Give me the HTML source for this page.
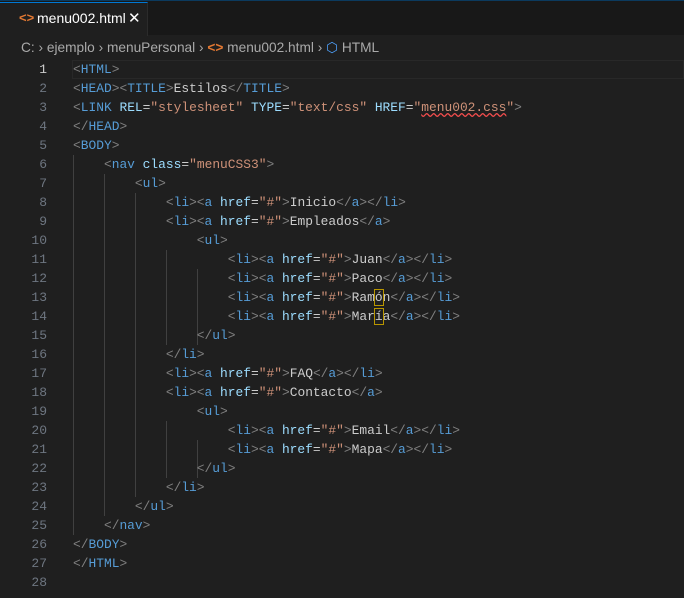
<!DOCTYPE html><html><head><style>
body{margin:0;width:684px;height:598px;background:#1f1f1f;overflow:hidden;font-family:"Liberation Sans",sans-serif;position:relative}
.tabs{position:absolute;top:0;left:0;width:684px;height:35px;background:#181818;border-top:1px solid #0b3a5e;box-sizing:border-box}
.tab{position:absolute;left:0;top:1px;width:148px;height:34px;background:#1f1f1f;border-right:1px solid #2b2b2b;border-top:1px solid #0078d4;box-sizing:border-box;color:#fff;font-size:14px}
.tab .i{position:absolute;left:19px;top:7px;color:#e37933;font-size:13px;font-weight:bold}
.tab .n{position:absolute;left:37px;top:7px}
.tab .x{position:absolute;left:128px;top:6px;font-size:15px}
.bc{position:absolute;top:40px;left:21px;font-size:13.7px;color:#a9a9a9;white-space:pre}
.code{position:absolute;top:60px;left:0;font-family:"Liberation Mono",monospace;font-size:12.9px;line-height:19px;color:#cccccc}
.l{height:19px;position:relative;white-space:pre}
.ln{position:absolute;left:0;width:47px;text-align:right;color:#6e7681;font-size:13px}
.ln.c{color:#cccccc}
.t{position:absolute;left:73px}
.b{color:#808080}.g{color:#569cd6}.a{color:#9cdcfe}.s{color:#ce9178}
.hl{position:absolute;left:72px;top:60px;width:612px;height:19px;border:1px solid #282828;box-sizing:border-box}
.ig{position:absolute;width:1px;background:#404040}
.u{text-decoration:underline wavy #f14c4c}
.bx{outline:1px solid #b89500}
</style></head><body>
<div class="tabs"><div class="tab"><span class="i">&lt;&gt;</span><span class="n">menu002.html</span><span class="x">✕</span></div></div>
<div class="bc">C: › ejemplo › menuPersonal › <span style="color:#e37933;font-weight:bold">&lt;&gt;</span> menu002.html › <span style="color:#4fa3ff">⬡</span> HTML</div>
<div class="hl"></div>
<div class="ig" style="left:73px;top:155px;height:380px"></div>
<div class="ig" style="left:104px;top:174px;height:342px"></div>
<div class="ig" style="left:135px;top:193px;height:304px"></div>
<div class="ig" style="left:166px;top:250px;height:95px"></div>
<div class="ig" style="left:166px;top:421px;height:57px"></div>
<div class="ig" style="left:197px;top:269px;height:76px"></div>
<div class="ig" style="left:197px;top:440px;height:38px"></div>
<div class="code">
<div class="l"><span class="ln c">1</span><span class="t"><span class="b">&lt;</span><span class="g">HTML</span><span class="b">&gt;</span></span></div>
<div class="l"><span class="ln">2</span><span class="t"><span class="b">&lt;</span><span class="g">HEAD</span><span class="b">&gt;&lt;</span><span class="g">TITLE</span><span class="b">&gt;</span>Estilos<span class="b">&lt;/</span><span class="g">TITLE</span><span class="b">&gt;</span></span></div>
<div class="l"><span class="ln">3</span><span class="t"><span class="b">&lt;</span><span class="g">LINK</span> <span class="a">REL</span>=<span class="s">"stylesheet"</span> <span class="a">TYPE</span>=<span class="s">"text/css"</span> <span class="a">HREF</span>=<span class="s">"<span class="u">menu002.css</span>"</span><span class="b">&gt;</span></span></div>
<div class="l"><span class="ln">4</span><span class="t"><span class="b">&lt;/</span><span class="g">HEAD</span><span class="b">&gt;</span></span></div>
<div class="l"><span class="ln">5</span><span class="t"><span class="b">&lt;</span><span class="g">BODY</span><span class="b">&gt;</span></span></div>
<div class="l"><span class="ln">6</span><span class="t">    <span class="b">&lt;</span><span class="g">nav</span> <span class="a">class</span>=<span class="s">"menuCSS3"</span><span class="b">&gt;</span></span></div>
<div class="l"><span class="ln">7</span><span class="t">        <span class="b">&lt;</span><span class="g">ul</span><span class="b">&gt;</span></span></div>
<div class="l"><span class="ln">8</span><span class="t">            <span class="b">&lt;</span><span class="g">li</span><span class="b">&gt;&lt;</span><span class="g">a</span> <span class="a">href</span>=<span class="s">"#"</span><span class="b">&gt;</span>Inicio<span class="b">&lt;/</span><span class="g">a</span><span class="b">&gt;&lt;/</span><span class="g">li</span><span class="b">&gt;</span></span></div>
<div class="l"><span class="ln">9</span><span class="t">            <span class="b">&lt;</span><span class="g">li</span><span class="b">&gt;&lt;</span><span class="g">a</span> <span class="a">href</span>=<span class="s">"#"</span><span class="b">&gt;</span>Empleados<span class="b">&lt;/</span><span class="g">a</span><span class="b">&gt;</span></span></div>
<div class="l"><span class="ln">10</span><span class="t">                <span class="b">&lt;</span><span class="g">ul</span><span class="b">&gt;</span></span></div>
<div class="l"><span class="ln">11</span><span class="t">                    <span class="b">&lt;</span><span class="g">li</span><span class="b">&gt;&lt;</span><span class="g">a</span> <span class="a">href</span>=<span class="s">"#"</span><span class="b">&gt;</span>Juan<span class="b">&lt;/</span><span class="g">a</span><span class="b">&gt;&lt;/</span><span class="g">li</span><span class="b">&gt;</span></span></div>
<div class="l"><span class="ln">12</span><span class="t">                    <span class="b">&lt;</span><span class="g">li</span><span class="b">&gt;&lt;</span><span class="g">a</span> <span class="a">href</span>=<span class="s">"#"</span><span class="b">&gt;</span>Paco<span class="b">&lt;/</span><span class="g">a</span><span class="b">&gt;&lt;/</span><span class="g">li</span><span class="b">&gt;</span></span></div>
<div class="l"><span class="ln">13</span><span class="t">                    <span class="b">&lt;</span><span class="g">li</span><span class="b">&gt;&lt;</span><span class="g">a</span> <span class="a">href</span>=<span class="s">"#"</span><span class="b">&gt;</span>Ram<span class="bx">ó</span>n<span class="b">&lt;/</span><span class="g">a</span><span class="b">&gt;&lt;/</span><span class="g">li</span><span class="b">&gt;</span></span></div>
<div class="l"><span class="ln">14</span><span class="t">                    <span class="b">&lt;</span><span class="g">li</span><span class="b">&gt;&lt;</span><span class="g">a</span> <span class="a">href</span>=<span class="s">"#"</span><span class="b">&gt;</span>Mar<span class="bx">í</span>a<span class="b">&lt;/</span><span class="g">a</span><span class="b">&gt;&lt;/</span><span class="g">li</span><span class="b">&gt;</span></span></div>
<div class="l"><span class="ln">15</span><span class="t">                <span class="b">&lt;/</span><span class="g">ul</span><span class="b">&gt;</span></span></div>
<div class="l"><span class="ln">16</span><span class="t">            <span class="b">&lt;/</span><span class="g">li</span><span class="b">&gt;</span></span></div>
<div class="l"><span class="ln">17</span><span class="t">            <span class="b">&lt;</span><span class="g">li</span><span class="b">&gt;&lt;</span><span class="g">a</span> <span class="a">href</span>=<span class="s">"#"</span><span class="b">&gt;</span>FAQ<span class="b">&lt;/</span><span class="g">a</span><span class="b">&gt;&lt;/</span><span class="g">li</span><span class="b">&gt;</span></span></div>
<div class="l"><span class="ln">18</span><span class="t">            <span class="b">&lt;</span><span class="g">li</span><span class="b">&gt;&lt;</span><span class="g">a</span> <span class="a">href</span>=<span class="s">"#"</span><span class="b">&gt;</span>Contacto<span class="b">&lt;/</span><span class="g">a</span><span class="b">&gt;</span></span></div>
<div class="l"><span class="ln">19</span><span class="t">                <span class="b">&lt;</span><span class="g">ul</span><span class="b">&gt;</span></span></div>
<div class="l"><span class="ln">20</span><span class="t">                    <span class="b">&lt;</span><span class="g">li</span><span class="b">&gt;&lt;</span><span class="g">a</span> <span class="a">href</span>=<span class="s">"#"</span><span class="b">&gt;</span>Email<span class="b">&lt;/</span><span class="g">a</span><span class="b">&gt;&lt;/</span><span class="g">li</span><span class="b">&gt;</span></span></div>
<div class="l"><span class="ln">21</span><span class="t">                    <span class="b">&lt;</span><span class="g">li</span><span class="b">&gt;&lt;</span><span class="g">a</span> <span class="a">href</span>=<span class="s">"#"</span><span class="b">&gt;</span>Mapa<span class="b">&lt;/</span><span class="g">a</span><span class="b">&gt;&lt;/</span><span class="g">li</span><span class="b">&gt;</span></span></div>
<div class="l"><span class="ln">22</span><span class="t">                <span class="b">&lt;/</span><span class="g">ul</span><span class="b">&gt;</span></span></div>
<div class="l"><span class="ln">23</span><span class="t">            <span class="b">&lt;/</span><span class="g">li</span><span class="b">&gt;</span></span></div>
<div class="l"><span class="ln">24</span><span class="t">        <span class="b">&lt;/</span><span class="g">ul</span><span class="b">&gt;</span></span></div>
<div class="l"><span class="ln">25</span><span class="t">    <span class="b">&lt;/</span><span class="g">nav</span><span class="b">&gt;</span></span></div>
<div class="l"><span class="ln">26</span><span class="t"><span class="b">&lt;/</span><span class="g">BODY</span><span class="b">&gt;</span></span></div>
<div class="l"><span class="ln">27</span><span class="t"><span class="b">&lt;/</span><span class="g">HTML</span><span class="b">&gt;</span></span></div>
<div class="l"><span class="ln">28</span><span class="t"></span></div>
</div>
</body></html>
